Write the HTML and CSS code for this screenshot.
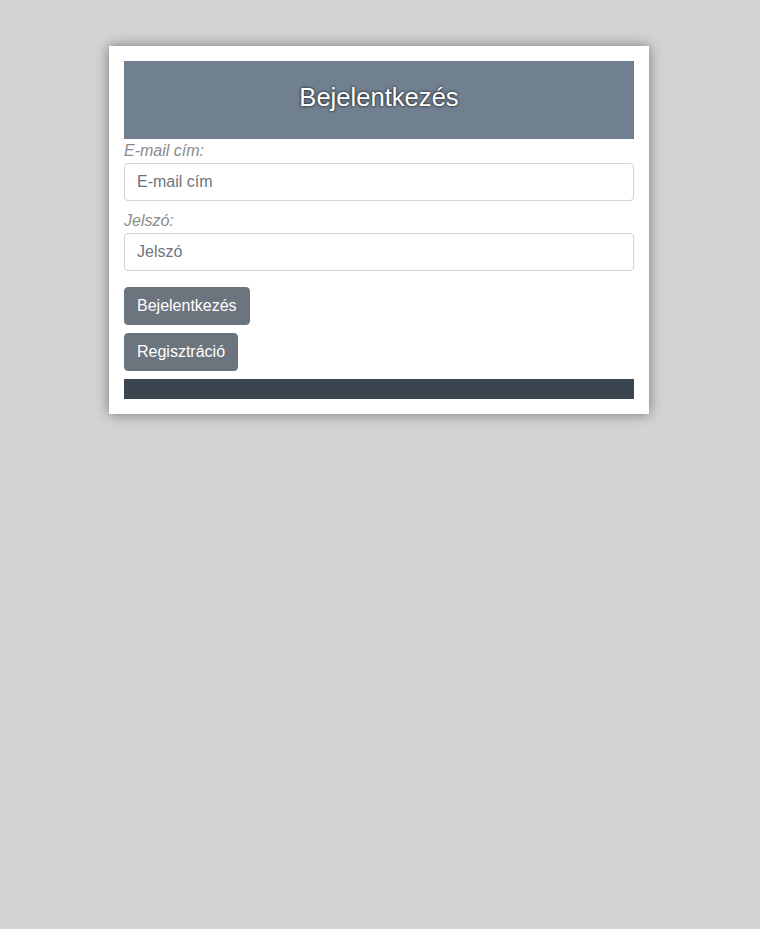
FILE: index.html
```html
<!DOCTYPE html>
<html lang="hu">
<head>
<meta charset="utf-8">
<title>Bejelentkezés</title>
<link rel="stylesheet" href="styles.css">
</head>
<body>
<div class="card">
  <div class="header"><h1>Bejelentkezés</h1></div>
  <form class="form">
    <label class="label" for="email">E-mail cím:</label>
    <input class="input" id="email" type="email" placeholder="E-mail cím">
    <label class="label second" for="pw">Jelszó:</label>
    <input class="input" id="pw" type="password" placeholder="Jelszó">
    <div class="buttons">
      <button type="button" class="btn">Bejelentkezés</button>
      <button type="button" class="btn">Regisztráció</button>
    </div>
  </form>
  <div class="footer"></div>
</div>
</body>
</html>
```
FILE: styles.css
```css
html, body {
  margin: 0;
  padding: 0;
}
body {
  background: #d3d3d3;
  font-family: "Liberation Sans", Arial, sans-serif;
  font-size: 16px;
  line-height: 1.5;
  padding-top: 46px;
  min-height: 929px;
  box-sizing: border-box;
}
.card {
  width: 540px;
  margin-left: 109px;
  background: #fff;
  padding: 15px;
  box-sizing: border-box;
  box-shadow: 0 0 12px rgba(0, 0, 0, 0.45);
}
.header {
  background: #708090;
  height: 78px;
  display: flex;
  align-items: center;
  justify-content: center;
}
.header h1 {
  margin: 0;
  font-size: 25.6px;
  font-weight: 400;
  color: #fff;
  text-shadow: 0 0 3px #000;
  line-height: 1.2;
  transform: translateY(-3px);
}
.form {
  display: flex;
  flex-direction: column;
}
.label {
  display: block;
  color: #8a8a8a;
  font-style: italic;
  line-height: 24px;
}
.label.second {
  margin-top: 8px;
}
.input {
  display: block;
  height: 38px;
  box-sizing: border-box;
  padding: 6px 12px;
  font-family: inherit;
  font-size: 16px;
  color: #495057;
  border: 1px solid #ced4da;
  border-radius: 4px;
  outline: none;
}
.input::placeholder {
  color: #6c757d;
}
.buttons {
  display: flex;
  flex-direction: column;
  align-items: flex-start;
  gap: 8px;
  margin-top: 16px;
}
.btn {
  height: 38px;
  padding: 6px 12px;
  font-family: inherit;
  font-size: 16px;
  color: #fff;
  background: #6c757d;
  border: 1px solid #6c757d;
  border-radius: 4px;
}
.footer {
  margin-top: 8px;
  height: 20px;
  background: #3a4550;
}
```
